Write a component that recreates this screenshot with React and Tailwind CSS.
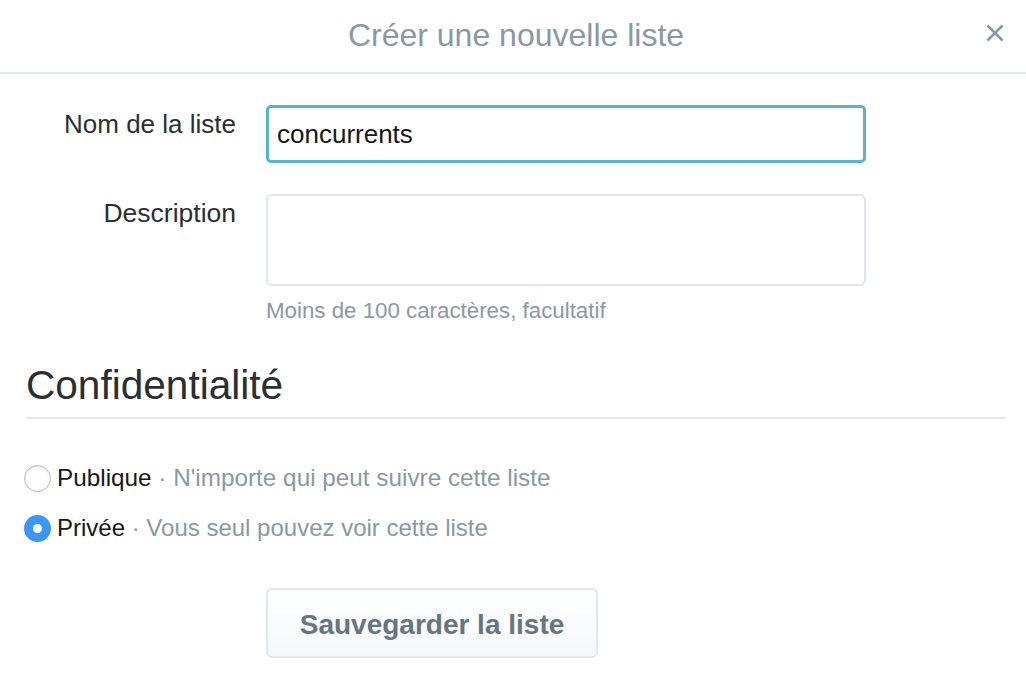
import React from "react";

export default function App() {
  const font = { fontFamily: '"Liberation Sans", Arial, sans-serif' };
  return (
    <div className="w-[1026px] h-[680px] bg-white overflow-hidden" style={font}>
      {/* header */}
      <div className="relative h-[74px] border-b-2 border-[#e1e8ed] flex items-center justify-center">
        <h1 className="text-[32px] leading-none text-[#8899a6] -mt-[2px] ml-[6px]">Créer une nouvelle liste</h1>
        <button className="absolute right-[20px] top-[22px] w-[22px] h-[22px] flex items-center justify-center">
          <svg width="18" height="18" viewBox="0 0 18 18">
            <path d="M1.5 1.5 L16.5 16.5 M16.5 1.5 L1.5 16.5" stroke="#8899a6" strokeWidth="2.6" strokeLinecap="butt" />
          </svg>
        </button>
      </div>

      {/* form */}
      <div className="pt-[31px]">
        <div className="grid grid-cols-[236px_600px] gap-x-[30px]">
          <label className="text-right text-[26px] leading-[30px] text-[#292f33] pt-[4px]">Nom de la liste</label>
          <div className="h-[58px] rounded-[5px] border-[3px] border-[#55b4d4] flex items-center pl-[8px]">
            <span className="text-[26px] leading-none text-[#14171a]">concurrents</span>
          </div>

          <label className="mt-[31px] text-right text-[26.5px] leading-[30px] text-[#292f33] pt-[4px]">Description</label>
          <div className="mt-[31px]">
            <div className="h-[92px] rounded-[6px] border-2 border-[#e1e8ed]" />
            <div className="mt-[12px] text-[22.3px] leading-[26px] text-[#8899a6]">Moins de 100 caractères, facultatif</div>
          </div>
        </div>

        {/* Confidentialité */}
        <div className="ml-[26px] mr-[20px] mt-[38px] border-b-2 border-[#e1e8ed] pb-[9px]">
          <h2 className="text-[40.6px] leading-[46px] text-[#292f33]">Confidentialité</h2>
        </div>

        <div className="pl-[24px] mt-[46px] flex flex-col gap-[24px]">
          <div className="flex items-center h-[26px]">
            <span className="w-[27px] h-[27px] rounded-full border border-[#b8b8b8] bg-white shadow-[inset_0_1px_2px_rgba(0,0,0,0.12)]" />
            <span className="ml-[6px] text-[24.3px] leading-none text-[#14171a]">Publique</span>
            <span className="text-[24.3px] leading-none text-[#8899a6] whitespace-pre"> · N'importe qui peut suivre cette liste</span>
          </div>
          <div className="flex items-center h-[26px]">
            <span className="w-[27px] h-[27px] rounded-full bg-[#3a97f6] flex items-center justify-center">
              <span className="w-[9px] h-[9px] rounded-full bg-white" />
            </span>
            <span className="ml-[6px] text-[24px] leading-none text-[#14171a]">Privée</span>
            <span className="text-[24px] leading-none text-[#8899a6] whitespace-pre"> · Vous seul pouvez voir cette liste</span>
          </div>
        </div>

        <div className="pl-[266px] mt-[47px]">
          <button className="w-[332px] h-[70px] pt-[3px] rounded-[6px] border-2 border-[#e1e8ed] bg-gradient-to-b from-white to-[#f5f8fa] text-[28px] font-bold text-[#66757f]">
            Sauvegarder la liste
          </button>
        </div>
      </div>
    </div>
  );
}
